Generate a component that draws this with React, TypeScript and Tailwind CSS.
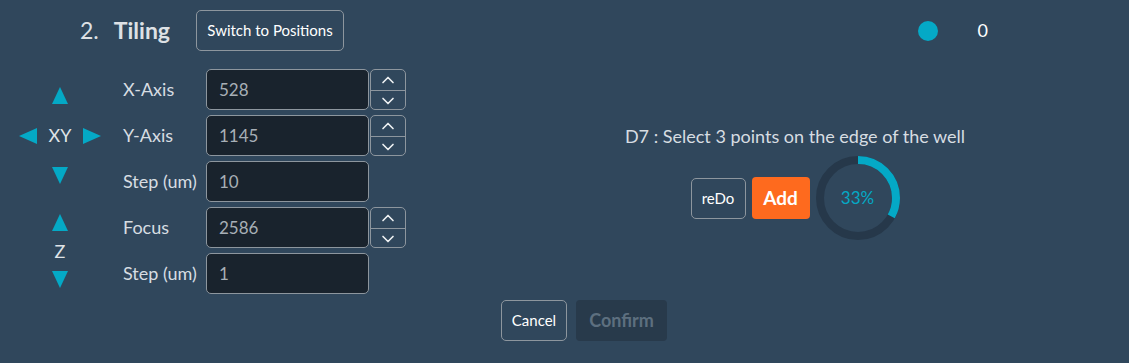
import { ChevronDown, ChevronUp } from 'lucide-react';

const Tri = ({ dir }: { dir: 'up' | 'down' | 'left' | 'right' }) => {
  const pts = {
    up: '8,0 16,17 0,17',
    down: '0,0 16,0 8,17',
    left: '0,8 18,0 18,16',
    right: '0,0 18,8 0,16',
  }[dir];
  const horiz = dir === 'left' || dir === 'right';
  return (
    <svg width={horiz ? 18 : 16} height={horiz ? 16 : 17} className="cursor-pointer">
      <polygon points={pts} fill="#04a9c6" />
    </svg>
  );
};

const Spinner = () => (
  <div className="flex flex-col w-[36px] h-[41px] ml-[1px] border border-[#8d969e] rounded-[5px] overflow-hidden">
    <button className="flex-1 flex items-center justify-center border-b border-[#8d969e]">
      <ChevronUp size={20} strokeWidth={2} color="#eef1f3" />
    </button>
    <button className="flex-1 flex items-center justify-center">
      <ChevronDown size={20} strokeWidth={2} color="#eef1f3" />
    </button>
  </div>
);

const Row = ({ label, value, spin }: { label: string; value: string; spin?: boolean }) => (
  <div className="flex items-center h-[41px]">
    <span className="w-[83px] text-[18px] text-[#d7dde2]">{label}</span>
    <div className="w-[163px] h-[41px] flex items-center pl-[12px] bg-[#19232d] border border-[#8d969e] rounded-[5px] text-[17px] text-[#a7afb6]">
      {value}
    </div>
    {spin && <Spinner />}
  </div>
);

export default function App() {
  const pct = 33;
  const r = 38;
  const c = 2 * Math.PI * r;
  return (
    <div className="w-[1129px] h-[363px] bg-[#30475c] font-['Lato',sans-serif] text-[#dfe3e7] overflow-hidden">
      <div className="flex items-center pt-[10px] h-[51px]">
        <h2 className="ml-[80px] text-[23px] text-[#dde1e5] flex items-baseline">
          <span>2.</span>
          <span className="ml-[15px] font-bold">Tiling</span>
        </h2>
        <button className="ml-[26px] h-[41px] w-[148px] border border-[#8d969e] rounded-[5px] text-[15px] text-white">
          Switch to Positions
        </button>
        <div className="ml-auto mr-[141px] flex items-center">
          <span className="w-[20px] h-[20px] rounded-full bg-[#04a9c6]" />
          <span className="ml-[40px] text-[18px] text-white">0</span>
        </div>
      </div>

      <div className="flex mt-[18px]">
        <div className="flex flex-col gap-[5px]">
          <div className="flex">
            <div className="w-[123px] flex flex-col items-center justify-center pr-[3px]">
              <Tri dir="up" />
              <div className="flex items-center my-[18px]">
                <Tri dir="left" />
                <span className="mx-[12px] text-[18px] text-[#dfe3e7]">XY</span>
                <Tri dir="right" />
              </div>
              <Tri dir="down" />
            </div>
            <div className="flex flex-col gap-[5px]">
              <Row label="X-Axis" value="528" spin />
              <Row label="Y-Axis" value="1145" spin />
              <Row label="Step (um)" value="10" />
            </div>
          </div>
          <div className="flex">
            <div className="w-[123px] flex flex-col items-center justify-center pr-[3px]">
              <Tri dir="up" />
              <span className="my-[6px] text-[18px] text-[#dfe3e7] leading-[28px]">Z</span>
              <Tri dir="down" />
            </div>
            <div className="flex flex-col gap-[5px]">
              <Row label="Focus" value="2586" spin />
              <Row label="Step (um)" value="1" />
            </div>
          </div>
        </div>

        <div className="ml-[204px] w-[370px] pt-[55px] flex flex-col items-center">
          <p className="text-[18px] text-[#d7dde2] leading-[24px]">D7 : Select 3 points on the edge of the well</p>
          <div className="flex items-center gap-[6px] mt-[8px]">
            <button className="w-[55px] h-[41px] border border-[#8d969e] rounded-[5px] text-[15px] text-white">
              reDo
            </button>
            <button className="w-[58px] h-[42px] bg-[#fe6a1e] rounded-[4px] text-[19px] font-bold text-white">
              Add
            </button>
            <div className="relative w-[84px] h-[84px]">
              <svg width="84" height="84" viewBox="0 0 84 84">
                <circle cx="42" cy="42" r={r} fill="none" stroke="#26384a" strokeWidth="8" />
                <circle
                  cx="42"
                  cy="42"
                  r={r}
                  fill="none"
                  stroke="#04a9c6"
                  strokeWidth="8"
                  strokeDasharray={`${(c * pct) / 100} ${c}`}
                  transform="rotate(-90 42 42)"
                />
              </svg>
              <span className="absolute inset-0 flex items-center justify-center text-[17px] text-[#04a9c6]">
                {pct}%
              </span>
            </div>
          </div>
        </div>
      </div>

      <div className="flex justify-center gap-[9px] pl-[39px] mt-[6px]">
        <button className="w-[66px] h-[41px] border border-[#8d969e] rounded-[5px] text-[15px] text-white">
          Cancel
        </button>
        <button className="w-[91px] h-[41px] bg-[#283a4b] rounded-[4px] text-[18px] font-bold text-[#5d6f7f]" disabled>
          Confirm
        </button>
      </div>
    </div>
  );
}
